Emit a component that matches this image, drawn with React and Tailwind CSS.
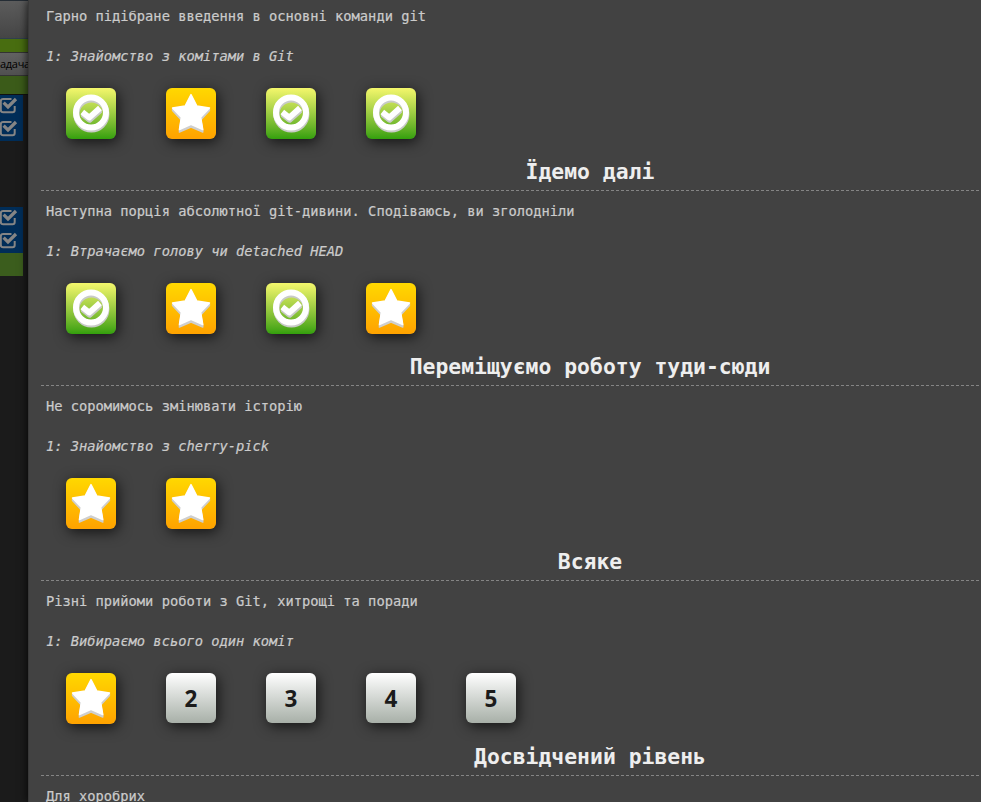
const sections = [
  {
    about: 'Гарно підібране введення в основні команди git',
    next: '1: Знайомство з комітами в Git',
    levels: ['done', 'best', 'done', 'done'],
  },
  {
    title: 'Їдемо далі',
    about: 'Наступна порція абсолютної git-дивини. Сподіваюсь, ви зголодніли',
    next: '1: Втрачаємо голову чи detached HEAD',
    levels: ['done', 'best', 'done', 'best'],
  },
  {
    title: 'Переміщуємо роботу туди-сюди',
    about: 'Не соромимось змінювати історію',
    next: '1: Знайомство з cherry-pick',
    levels: ['best', 'best'],
  },
  {
    title: 'Всяке',
    about: 'Різні прийоми роботи з Git, хитрощі та поради',
    next: '1: Вибираємо всього один коміт',
    levels: ['best', '2', '3', '4', '5'],
  },
  { title: 'Досвідчений рівень', about: 'Для хоробрих', levels: [] },
];

const tileShadow = 'shadow-[2px_3px_14px_rgba(0,0,0,0.7)]';

function CheckShape({ color }) {
  return (
    <g fill="none" stroke={color}>
      <circle cx="25" cy="24.4" r="15" strokeWidth="6" />
      <path d="M16.3 24 L23.2 29.6 L34 20" strokeWidth="5.8" strokeLinejoin="round" />
    </g>
  );
}

const starPath =
  'M25 6.5 L30.9 18 L43.5 20 L34.7 29.3 L36.8 41.5 L25 36.4 L13.4 41.5 L15.3 29.3 L6.5 20 L19.1 18 Z';

function Level({ kind }) {
  if (kind === 'done') {
    return (
      <div className={`h-[51px] w-[50px] rounded-[6px] bg-linear-to-b from-[#f4f76c] to-[#32a00c] ${tileShadow}`}>
        <svg viewBox="0 0 50 51" className="h-[51px] w-[50px]">
          <g transform="translate(0.4 2.2)"><CheckShape color="#c9cbc8" /></g>
          <g transform="translate(0.2 1.1)"><CheckShape color="#c9cbc8" /></g>
          <CheckShape color="#fff" />
        </svg>
      </div>
    );
  }
  if (kind === 'best') {
    return (
      <div className={`h-[51px] w-[50px] rounded-[6px] bg-linear-to-b from-[#ffd800] to-[#ffa200] ${tileShadow}`}>
        <svg viewBox="0 0 50 51" className="h-[51px] w-[50px]" strokeLinejoin="round" strokeWidth="1.4">
          <path d={starPath} transform="translate(0 2.6)" fill="#cfcfcf" stroke="#cfcfcf" />
          <path d={starPath} transform="translate(0 1.3)" fill="#cfcfcf" stroke="#cfcfcf" />
          <path d={starPath} fill="#fff" stroke="#fff" />
        </svg>
      </div>
    );
  }
  return (
    <div className={`flex h-[50px] w-[50px] items-center justify-center rounded-[6px] bg-linear-to-b from-white to-[#a8b0a8] pt-px ${tileShadow}`}>
      <span className="[font-family:'Open_Sans','Noto_Sans',sans-serif] text-[22.5px] leading-[30px] font-bold text-[#1b1b1b]">
        {kind}
      </span>
    </div>
  );
}

function CheckRow() {
  return (
    <div className="h-[23px] w-[23px] shrink-0 bg-[#002d58]">
      <svg viewBox="0 0 23 23" className="h-[23px] w-[23px]" fill="none" stroke="#858585">
        <path d="M11.5 4 H3 Q0.8 4 0.8 6.2 V15 Q0.8 17.2 3 17.2 H12.5 Q14.7 17.2 14.7 15 V11" strokeWidth="2" />
        <path d="M3.6 7.6 L8 12 L16 4" strokeWidth="3.2" />
      </svg>
    </div>
  );
}

function Backdrop() {
  return (
    <div className="flex h-full w-[28px] shrink-0 flex-col overflow-hidden bg-[#1b1b1b]">
      <div className="h-[39px] shrink-0 border-t border-b border-t-[#252d35] border-b-[#30404d] bg-linear-to-b from-[#5c5c5c] to-[#454545]" />
      <div className="h-[13px] shrink-0 bg-[#486d10]" />
      <div className="flex h-[24px] shrink-0 items-center overflow-hidden border-y border-[#333] bg-linear-to-b from-[#626262] to-[#505050] [font-family:'Open_Sans','Noto_Sans',sans-serif] text-[11px] tracking-[-0.3px] whitespace-nowrap text-black">
        адача
      </div>
      <div className="h-[18px] shrink-0 bg-[#3b5b19]" />
      <div className="h-px shrink-0 bg-[#111]" />
      <CheckRow />
      <CheckRow />
      <div className="h-[66px] shrink-0" />
      <CheckRow />
      <CheckRow />
      <div className="h-[23px] w-[23px] shrink-0 bg-[#3b5d1d]" />
    </div>
  );
}

export default function App() {
  return (
    <div className="flex h-[802px] w-[981px] overflow-hidden bg-[#424242] font-['DejaVu_Sans_Mono',monospace]">
      <Backdrop />
      <main className="relative h-full min-w-0 flex-1 overflow-hidden border-l border-[#393939] bg-[#424242] pl-[12px] shadow-[-1px_0_8px_rgba(0,0,0,0.7)]">
        <div className="w-[1098px]">
          {sections.map((s) => (
            <section key={s.about}>
              {s.title && (
                <>
                  <h3 className="flex h-[36px] items-center justify-center text-[21.4px] font-bold whitespace-pre text-[#eee]">
                    {s.title}
                  </h3>
                  <div className="h-px bg-[repeating-linear-gradient(90deg,#858585_0px,#858585_3px,transparent_3px,transparent_5px)]" />
                </>
              )}
              <p className={`h-[40px] pl-[5px] text-[13.72px] leading-[20px] whitespace-pre text-[#cbcbcb] [-webkit-text-stroke:0.2px_#cbcbcb] ${s.title ? 'pt-[10px]' : '-mb-[4px] pt-[6px]'}`}>
                {s.about}
              </p>
              {s.next && (
                <>
                  <p className="h-[42px] pt-[10px] pl-[5px] text-[13.72px] leading-[20px] whitespace-pre text-[#cbcbcb] italic [-webkit-text-stroke:0.2px_#cbcbcb]">
                    {s.next}
                  </p>
                  <div className="flex h-[76px] gap-[50px] pt-[10px] pl-[25px]">
                    {s.levels.map((kind, i) => (
                      <Level key={i} kind={kind} />
                    ))}
                  </div>
                </>
              )}
            </section>
          ))}
        </div>
      </main>
    </div>
  );
}
